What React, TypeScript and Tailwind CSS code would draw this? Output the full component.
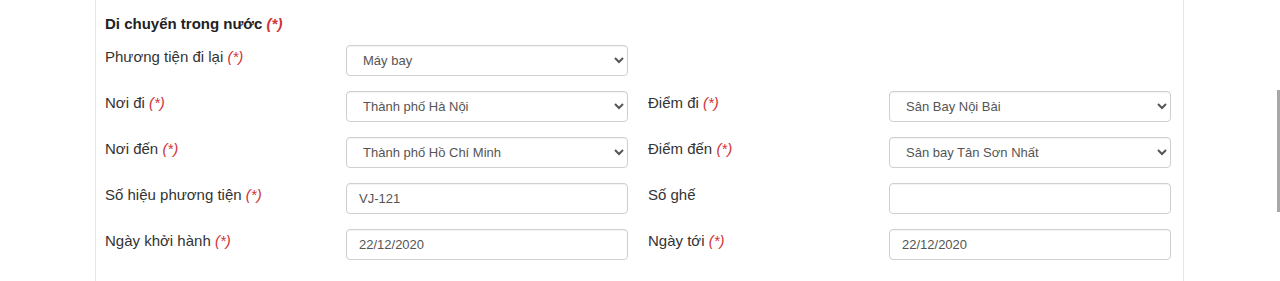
import React from 'react';

const Req: React.FC<{ bold?: boolean }> = ({ bold }) => (
  <span className={`italic text-[#d0343a] ${bold ? 'font-bold' : 'font-normal'}`}>(*)</span>
);

interface FieldProps {
  label: string;
  required?: boolean;
  value?: string;
  options?: string[];
}

const inputCls =
  'w-full h-[31px] rounded-[4px] border border-[#cfcfcf] bg-white px-3 text-[13px] text-[#555] shadow-[inset_0_1px_1px_rgba(0,0,0,0.05)] outline-none';

const Field: React.FC<FieldProps> = ({ label, required, value, options }) => (
  <div className="grid grid-cols-[241px_1fr] items-start">
    <label className="pt-[1px] text-[15px] leading-[22px] text-[#333]">
      {label} {required && <Req />}
    </label>
    {options ? (
      <select className={inputCls} defaultValue={value}>
        {options.map((o) => (
          <option key={o} value={o}>{o}</option>
        ))}
      </select>
    ) : (
      <input type="text" className={inputCls} defaultValue={value} />
    )}
  </div>
);

export default function App() {
  return (
    <div className="flex h-[281px] w-full bg-white font-['Liberation_Sans',Arial,sans-serif]">
      <div className="w-[95px] shrink-0" />
      <div className="w-[1089px] shrink-0 border-x border-[#e6e6e6] pl-[9px] pr-[12px] pt-[13px]">
        <h3 className="text-[15px] leading-[22px] font-bold text-[#222]">
          Di chuyển trong nước <Req bold />
        </h3>
        <div className="mt-[10px] grid grid-cols-2 gap-x-[20px] gap-y-[15px]">
          <Field label="Phương tiện đi lại" required value="Máy bay" options={['Máy bay', 'Tàu hỏa', 'Ô tô']} />
          <div />
          <Field label="Nơi đi" required value="Thành phố Hà Nội" options={['Thành phố Hà Nội', 'Thành phố Hồ Chí Minh']} />
          <Field label="Điểm đi" required value="Sân Bay Nội Bài" options={['Sân Bay Nội Bài']} />
          <Field label="Nơi đến" required value="Thành phố Hồ Chí Minh" options={['Thành phố Hà Nội', 'Thành phố Hồ Chí Minh']} />
          <Field label="Điểm đến" required value="Sân bay Tân Sơn Nhất" options={['Sân bay Tân Sơn Nhất']} />
          <Field label="Số hiệu phương tiện" required value="VJ-121" />
          <Field label="Số ghế" value="" />
          <Field label="Ngày khởi hành" required value="22/12/2020" />
          <Field label="Ngày tới" required value="22/12/2020" />
        </div>
      </div>
      <div className="flex-1" />
      <div className="w-[3px] shrink-0 pt-[90px]">
        <div className="h-[122px] w-full bg-[#a8a8a8]" />
      </div>
    </div>
  );
}
